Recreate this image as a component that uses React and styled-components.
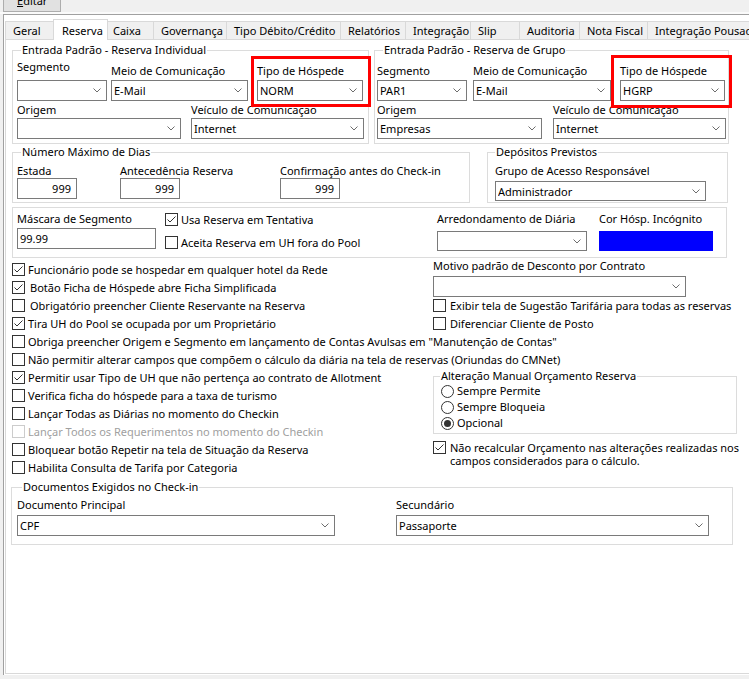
import React from 'react';
import styled, { createGlobalStyle } from 'styled-components';

const GlobalStyle = createGlobalStyle`
  html, body { margin: 0; padding: 0; background: #f0f0f0; overflow: hidden; }
`;

const FONT = `"Noto Sans", "Open Sans", "Liberation Sans", sans-serif`;

/* ---------- window chrome ---------- */

const Window = styled.div`
  width: 749px;
  height: 679px;
  overflow: hidden;
  background: #f0f0f0;
  font-family: ${FONT};
  font-size: 11px;
  color: #000;
  display: flex;
  flex-direction: column;
`;

const MenuBar = styled.div`
  height: 12px;
  flex: none;
  padding-left: 3px;
  display: flex;
  align-items: flex-end;
`;

const MenuButton = styled.div`
  box-sizing: border-box;
  width: 58px;
  height: 22px;
  flex: none;
  background: #e1e1e1;
  border: 1px solid #adadad;
  padding-left: 13px;
  display: flex;
  align-items: center;
  line-height: 14px;
`;

const MenuEdge = styled.div`
  height: 2px;
  flex: none;
  background: #fafafa;
`;

const Frame = styled.div`
  box-sizing: border-box;
  width: 800px;
  height: 661px;
  flex: none;
  margin-left: 3px;
  border-top: 1px solid #a0a0a0;
  border-left: 1px solid #a0a0a0;
  background: #fff;
  padding: 6px 0 0 1px;
  display: flex;
  flex-direction: column;
`;

const TabStrip = styled.div`
  height: 18px;
  flex: none;
  display: flex;
  align-items: flex-end;
`;

const Tab = styled.div`
  box-sizing: border-box;
  flex: none;
  width: ${p => p.$w}px;
  height: ${p => (p.$active ? 21 : 18)}px;
  margin-left: ${p => (p.$first ? 0 : p.$active ? -2 : -1)}px;
  margin-right: ${p => (p.$active ? -2 : 0)}px;
  margin-bottom: ${p => (p.$active ? -1 : 0)}px;
  position: relative;
  z-index: ${p => (p.$active ? 1 : 0)};
  border: 1px solid #d9d9d9;
  border-bottom: none;
  background: ${p => (p.$active ? '#fff' : '#f0f0f0')};
  padding-left: ${p => (p.$active ? 8 : 7)}px;
  display: flex;
  align-items: center;
  white-space: nowrap;
  overflow: hidden;
`;

const Page = styled.div`
  box-sizing: border-box;
  height: 635px;
  flex: none;
  border: 1px solid #d9d9d9;
  border-right: none;
  background: #fff;
  padding: 3px 0 0 6px;
`;

/* ---------- layout ---------- */

const Row = styled.div`
  display: flex;
  align-items: ${p => p.$align || 'flex-start'};
  margin-top: ${p => p.$mt || 0}px;
  gap: ${p => p.$gap || 0}px;
`;

const Column = styled.div`
  display: flex;
  flex-direction: column;
  flex: none;
  width: ${p => (p.$w ? `${p.$w}px` : 'auto')};
  padding-top: ${p => p.$pt || 0}px;
  margin-left: ${p => p.$ml || 0}px;
  gap: ${p => p.$gap || 0}px;
`;

/* ---------- group boxes ---------- */

const GroupBox = styled.fieldset`
  box-sizing: border-box;
  flex: none;
  width: ${p => p.$w}px;
  margin: ${p => p.$mt || 0}px 0 0 ${p => p.$ml || 0}px;
  padding: 0;
  min-width: 0;
  border: 1px solid #dcdcdc;
`;

const GroupTitle = styled.legend`
  margin-left: ${p => p.$inset ?? 8}px;
  padding: 0 1px;
  height: 14px;
  line-height: 14px;
  white-space: nowrap;
`;

const GroupBody = styled.div`
  padding: ${p => p.$pad};
`;

/* ---------- fields ---------- */

const Field = styled.div`
  display: flex;
  flex-direction: column;
  flex: none;
  width: ${p => p.$w}px;
  margin-left: ${p => p.$ml || 0}px;
`;

const Label = styled.div`
  height: 15px;
  line-height: 15px;
  white-space: nowrap;
  margin-bottom: ${p => p.$gap ?? 2}px;
`;

const Box = styled.div`
  box-sizing: border-box;
  height: ${p => p.$h || 21}px;
  border: 1px solid #7a7a7a;
  background: #fff;
  display: flex;
  align-items: center;
  line-height: 15px;
  white-space: nowrap;
  overflow: hidden;
`;

const ComboShell = styled(Box)`
  padding: 0 5px 0 2px;
`;

const ComboText = styled.span`
  flex: 1;
  overflow: hidden;
`;

const TextBox = styled(Box)`
  justify-content: ${p => (p.$align === 'right' ? 'flex-end' : 'flex-start')};
  padding: 0 5px 0 2px;
`;

const Swatch = styled.div`
  height: ${p => p.$h || 20}px;
  background: ${p => p.$color};
`;

const Highlight = styled.div`
  position: relative;
  z-index: 1;
  flex: none;
  border: 3px solid #ff0000;
  padding: ${p => p.$pad};
  margin: ${p => p.$m};
`;

const Chevron = () => (
  <svg width="8" height="5" viewBox="0 0 8 5">
    <polyline points="0.5,0.5 4,4 7.5,0.5" fill="none" stroke="#6d6d6d" strokeWidth="1" />
  </svg>
);

const Combo = ({ value = '', h }) => (
  <ComboShell $h={h}>
    <ComboText>{value}</ComboText>
    <Chevron />
  </ComboShell>
);

/* ---------- check boxes and radios ---------- */

const CheckRow = styled.div`
  display: flex;
  align-items: flex-start;
  height: ${p => (p.$h ? `${p.$h}px` : 'auto')};
  line-height: ${p => p.$lh || p.$h || 18}px;
  margin-top: ${p => p.$mt || 0}px;
  white-space: nowrap;
  color: ${p => (p.$disabled ? '#a0a0a0' : '#000')};
`;

const CheckSquare = styled.span`
  box-sizing: border-box;
  flex: none;
  width: 13px;
  height: 13px;
  margin-top: ${p => p.$top ?? 2}px;
  border: 1px solid ${p => (p.$disabled ? '#cccccc' : '#333333')};
  background: #fff;
  display: flex;
`;

const CheckText = styled.span`
  margin-left: ${p => p.$ml || 3}px;
`;

/* caption that wraps onto a second line inside a fixed width */
const CheckParagraph = styled.span`
  margin-left: ${p => p.$ml || 3}px;
  width: ${p => p.$w}px;
  white-space: normal;
`;

const Check = ({ checked, disabled, top }) => (
  <CheckSquare $disabled={disabled} $top={top}>
    {checked && (
      <svg width="11" height="11" viewBox="0 0 11 11">
        <polyline points="1.5,5.5 4,8 9.5,2.5" fill="none" stroke="#333" strokeWidth="1" />
      </svg>
    )}
  </CheckSquare>
);

const RadioRow = styled.div`
  display: flex;
  align-items: flex-start;
  height: 16px;
  line-height: 16px;
  white-space: nowrap;
`;

const RadioDot = styled.span`
  box-sizing: border-box;
  flex: none;
  width: 13px;
  height: 13px;
  margin-top: 2px;
  margin-right: 3px;
  border-radius: 50%;
  border: 1px solid #333;
  background: #fff;
  display: flex;
  align-items: center;
  justify-content: center;

  &::after {
    content: '';
    width: 7px;
    height: 7px;
    border-radius: 50%;
    background: #333;
    display: ${p => (p.$on ? 'block' : 'none')};
  }
`;

/* ---------- content ---------- */

const tabs = [
  { label: 'Geral', w: 50 },
  { label: 'Reserva', w: 55, active: true },
  { label: 'Caixa', w: 49 },
  { label: 'Governança', w: 74 },
  { label: 'Tipo Débito/Crédito', w: 115 },
  { label: 'Relatórios', w: 66 },
  { label: 'Integração', w: 66 },
  { label: 'Slip', w: 50 },
  { label: 'Auditoria', w: 61 },
  { label: 'Nota Fiscal', w: 69 },
  { label: 'Integração Pousada', w: 130 },
];

const options = [
  { label: 'Funcionário pode se hospedar em qualquer hotel da Rede', checked: true },
  { label: 'Botão Ficha de Hóspede abre Ficha Simplificada', checked: true, indent: true },
  { label: 'Obrigatório preencher Cliente Reservante na Reserva', indent: true },
  { label: 'Tira UH do Pool se ocupada por um Proprietário', checked: true },
  { label: 'Obriga preencher Origem e Segmento em lançamento de Contas Avulsas em "Manutenção de Contas"' },
  { label: 'Não permitir alterar campos que compõem o cálculo da diária na tela de reservas (Oriundas do CMNet)' },
  { label: 'Permitir usar Tipo de UH que não pertença ao contrato de Allotment', checked: true },
  { label: 'Verifica ficha do hóspede para a taxa de turismo' },
  { label: 'Lançar Todas as Diárias no momento do Checkin' },
  { label: 'Lançar Todos os Requerimentos no momento do Checkin', disabled: true },
  { label: 'Bloquear botão Repetir na tela de Situação da Reserva' },
  { label: 'Habilita Consulta de Tarifa por Categoria' },
];

const budgetModes = [
  { label: 'Sempre Permite' },
  { label: 'Sempre Bloqueia' },
  { label: 'Opcional', on: true },
];

export default function App() {
  return (
    <>
      <GlobalStyle />
      <Window>
        <MenuBar>
          <MenuButton>
            <u>E</u>ditar
          </MenuButton>
        </MenuBar>
        <MenuEdge />
        <Frame>
          <TabStrip>
            {tabs.map((t, i) => (
              <Tab key={t.label} $w={t.w} $active={t.active} $first={i === 0}>
                {t.label}
              </Tab>
            ))}
          </TabStrip>

          <Page>
            {/* default entries: individual / group */}
            <Row $gap={5}>
              <GroupBox $w={357}>
                <GroupTitle>Entrada Padrão - Reserva Individual</GroupTitle>
                <GroupBody $pad="2px 0 4px 4px">
                  <Row $align="flex-end">
                    <Field $w={90}>
                      <Label $gap={6}>Segmento</Label>
                      <Combo />
                    </Field>
                    <Field $w={137} $ml={4}>
                      <Label>Meio de Comunicação</Label>
                      <Combo value="E-Mail" />
                    </Field>
                    <Highlight $m="-7px 0 -6px 3px" $pad="4px 5px 3px 3px">
                      <Field $w={106}>
                        <Label>Tipo de Hóspede</Label>
                        <Combo value="NORM" />
                      </Field>
                    </Highlight>
                  </Row>
                  <Row $mt={1}>
                    <Field $w={164}>
                      <Label $gap={1}>Origem</Label>
                      <Combo />
                    </Field>
                    <Field $w={173} $ml={10}>
                      <Label $gap={1}>Veículo de Comunicação</Label>
                      <Combo value="Internet" />
                    </Field>
                  </Row>
                </GroupBody>
              </GroupBox>

              <GroupBox $w={355}>
                <GroupTitle>Entrada Padrão - Reserva de Grupo</GroupTitle>
                <GroupBody $pad="6px 0 4px 2px">
                  <Row $align="flex-end">
                    <Field $w={90}>
                      <Label>Segmento</Label>
                      <Combo value="PAR1" />
                    </Field>
                    <Field $w={138} $ml={6}>
                      <Label>Meio de Comunicação</Label>
                      <Combo value="E-Mail" />
                    </Field>
                    <Highlight $m="-8px 0 -7px 0" $pad="5px 4px 4px 6px">
                      <Field $w={105}>
                        <Label>Tipo de Hóspede</Label>
                        <Combo value="HGRP" />
                      </Field>
                    </Highlight>
                  </Row>
                  <Row $mt={1}>
                    <Field $w={165}>
                      <Label $gap={1}>Origem</Label>
                      <Combo value="Empresas" />
                    </Field>
                    <Field $w={173} $ml={11}>
                      <Label $gap={1}>Veículo de Comunicação</Label>
                      <Combo value="Internet" />
                    </Field>
                  </Row>
                </GroupBody>
              </GroupBox>
            </Row>

            {/* day limits and deposits */}
            <Row $mt={1}>
              <GroupBox $w={458}>
                <GroupTitle>Número Máximo de Dias</GroupTitle>
                <GroupBody $pad="4px 0 3px 4px">
                  <Row>
                    <Field $w={60}>
                      <Label $gap={0}>Estada</Label>
                      <TextBox $align="right">999</TextBox>
                    </Field>
                    <Field $w={60} $ml={43}>
                      <Label $gap={0}>Antecedência Reserva</Label>
                      <TextBox $align="right">999</TextBox>
                    </Field>
                    <Field $w={60} $ml={100}>
                      <Label $gap={0}>Confirmação antes do Check-in</Label>
                      <TextBox $align="right">999</TextBox>
                    </Field>
                  </Row>
                </GroupBody>
              </GroupBox>

              <GroupBox $w={241} $ml={17}>
                <GroupTitle $inset={7}>Depósitos Previstos</GroupTitle>
                <GroupBody $pad="4px 0 1px 7px">
                  <Field $w={211}>
                    <Label $gap={3}>Grupo de Acesso Responsável</Label>
                    <Combo value="Administrador" h={20} />
                  </Field>
                </GroupBody>
              </GroupBox>
            </Row>

            {/* mask, flags, rounding, colour */}
            <GroupBox $w={715} $mt={4}>
              <GroupBody $pad="3px 0 6px 4px">
                <Row>
                  <Field $w={139}>
                    <Label>Máscara de Segmento</Label>
                    <TextBox>99.99</TextBox>
                  </Field>
                  <Column $w={272} $ml={9} $gap={6}>
                    <CheckRow $h={17}>
                      <Check checked />
                      <CheckText>Usa Reserva em Tentativa</CheckText>
                    </CheckRow>
                    <CheckRow $h={17}>
                      <Check />
                      <CheckText>Aceita Reserva em UH fora do Pool</CheckText>
                    </CheckRow>
                  </Column>
                  <Field $w={150}>
                    <Label $gap={5}>Arredondamento de Diária</Label>
                    <Combo h={20} />
                  </Field>
                  <Field $w={114} $ml={12}>
                    <Label $gap={5}>Cor Hósp. Incógnito</Label>
                    <Swatch $color="#0000ff" />
                  </Field>
                </Row>
              </GroupBody>
            </GroupBox>

            {/* general options */}
            <Row>
              <Column $w={421} $pt={3}>
                {options.map(o => (
                  <CheckRow key={o.label} $h={18} $disabled={o.disabled}>
                    <Check checked={o.checked} disabled={o.disabled} />
                    <CheckText $ml={o.indent ? 5 : 3}>{o.label}</CheckText>
                  </CheckRow>
                ))}
              </Column>

              <Column>
                <Field $w={253}>
                  <Label $gap={3}>Motivo padrão de Desconto por Contrato</Label>
                  <Combo />
                </Field>
                <CheckRow $h={18}>
                  <Check />
                  <CheckText $ml={4}>Exibir tela de Sugestão Tarifária para todas as reservas</CheckText>
                </CheckRow>
                <CheckRow $h={18}>
                  <Check />
                  <CheckText $ml={4}>Diferenciar Cliente de Posto</CheckText>
                </CheckRow>

                <GroupBox $w={304} $mt={36}>
                  <GroupTitle $inset={6}>Alteração Manual Orçamento Reserva</GroupTitle>
                  <GroupBody $pad="0 0 2px 7px">
                    {budgetModes.map(m => (
                      <RadioRow key={m.label}>
                        <RadioDot $on={m.on} />
                        {m.label}
                      </RadioRow>
                    ))}
                  </GroupBody>
                </GroupBox>

                <CheckRow $lh={13} $mt={7}>
                  <Check checked top={0} />
                  <CheckParagraph $ml={4} $w={292}>
                    Não recalcular Orçamento nas alterações realizadas nos campos considerados para o cálculo.
                  </CheckParagraph>
                </CheckRow>
              </Column>
            </Row>

            {/* documents required at check-in */}
            <GroupBox $w={722} $ml={-1} $mt={3}>
              <GroupTitle $inset={10}>Documentos Exigidos no Check-in</GroupTitle>
              <GroupBody $pad="3px 0 8px 5px">
                <Row>
                  <Field $w={318}>
                    <Label $gap={3}>Documento Principal</Label>
                    <Combo value="CPF" />
                  </Field>
                  <Field $w={313} $ml={61}>
                    <Label $gap={3}>Secundário</Label>
                    <Combo value="Passaporte" />
                  </Field>
                </Row>
              </GroupBody>
            </GroupBox>
          </Page>
        </Frame>
      </Window>
    </>
  );
}
